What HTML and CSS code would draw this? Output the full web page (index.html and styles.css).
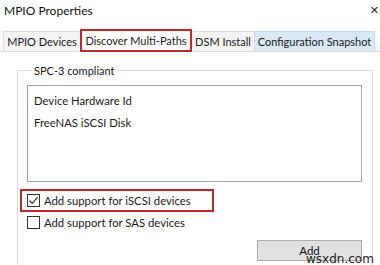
FILE: index.html
```html
<!DOCTYPE html>
<html>
<head>
<meta charset="utf-8">
<link rel="stylesheet" href="styles.css">
</head>
<body>
<div class="window">
  <div class="titlebar">
    <span class="title">MPIO Properties</span>
    <span class="close">✕</span>
  </div>
  <div class="tabs">
    <div class="tab t1">MPIO Devices</div>
    <div class="tab t2 active">Discover Multi-Paths</div>
    <div class="tab t3">DSM Install</div>
    <div class="tab t4 hover">Configuration Snapshot</div>
  </div>
  <div class="panel">
    <fieldset class="group">
      <legend>SPC-3 compliant</legend>
      <div class="listbox">
        <div class="item">Device Hardware Id</div>
        <div class="item">FreeNAS iSCSI Disk</div>
      </div>
      <div class="checks">
        <label class="check marked"><span class="box"><svg width="11" height="11" viewBox="0 0 11 11"><path d="M1.5 5.5 L4.2 8.3 L9.6 2.2" fill="none" stroke="#333" stroke-width="1.2"/></svg></span>Add support for iSCSI devices</label>
        <label class="check"><span class="box"></span>Add support for SAS devices</label>
      </div>
      <div class="actions">
        <button class="btn">Add</button>
      </div>
    </fieldset>
  </div>
  <div class="watermark">wsxdn.com</div>
</div>
</body>
</html>
```
FILE: styles.css
```css
html, body {
  margin: 0;
  padding: 0;
  background: #ffffff;
}
.window {
  position: relative;
  width: 380px;
  height: 265px;
  overflow: hidden;
  font-family: "Lato", "Open Sans", sans-serif;
  font-size: 11px;
  color: #1a1a1a;
  background: #ffffff;
}
.titlebar {
  height: 24px;
  display: flex;
  align-items: center;
  justify-content: space-between;
  padding: 0 0 4px 4px;
  box-sizing: border-box;
  background: #ffffff;
}
.title {
  font-size: 12px;
  color: #111;
}
.close {
  font-family: "DejaVu Sans", sans-serif;
  font-size: 11px;
  color: #222;
  margin-right: 1px;
}
.tabs {
  height: 28px;
  display: flex;
  align-items: flex-end;
  padding-left: 3px;
  background: linear-gradient(#ffffff, #f4f4f4);
  border-bottom: 1px solid #dadada;
  box-sizing: border-box;
}
.tab {
  height: 20px;
  line-height: 19px;
  background: #f3f3f3;
  border: 1px solid #dadada;
  border-bottom: none;
  box-sizing: border-box;
  white-space: nowrap;
  text-align: center;
  flex: none;
}
.t1 { width: 78px; }
.t2 { width: 112px; }
.t3 { width: 64px; }
.t4 { width: 121px; }
.tab.active {
  height: 23px;
  line-height: 20px;
  margin: 0 -1px -1px -1px;
  background: #ffffff;
  border: 2px solid #c0272d;
  position: relative;
  z-index: 1;
}
.tab.hover {
  background: #d9e8f5;
  border-color: #c4d9ec;
  margin-left: -1px;
}
.panel {
  padding: 12px 7px 0 17px;
}
.group {
  margin: 0;
  border: 1px solid #dcdcdc;
  padding: 8px 10px 0 9px;
  height: 200px;
}
.group legend {
  padding: 0 3px;
  margin-left: 4px;
  color: #1a1a1a;
}
.listbox {
  height: 97px;
  border: 1px solid #9f9f9f;
  border-right-color: #a8a8a8;
  padding: 4px 6px;
  box-sizing: border-box;
  background: #fff;
}
.item {
  height: 22px;
  line-height: 22px;
  font-size: 11.3px;
}
.checks {
  display: flex;
  flex-direction: column;
  margin-top: 7px;
}
.check {
  display: flex;
  align-items: center;
  gap: 4px;
  height: 21px;
  font-size: 11.3px;
  white-space: nowrap;
}
.check.marked {
  height: 23px;
  margin-left: -7px;
  padding-left: 5px;
  width: 194px;
  border: 2px solid #c0272d;
  box-sizing: border-box;
}
.box {
  width: 11px;
  height: 11px;
  border: 1px solid #333;
  background: #fff;
  display: inline-flex;
  align-items: center;
  justify-content: center;
}
.actions {
  display: flex;
  justify-content: flex-end;
  margin-top: 7px;
}
.btn {
  width: 105px;
  height: 21px;
  background: #e1e1e1;
  border: 1px solid #adadad;
  font-family: inherit;
  font-size: 11.5px;
  color: #111;
  padding: 0;
}
.watermark {
  position: absolute;
  left: 306px;
  top: 252px;
  font-family: "DejaVu Sans", sans-serif;
  font-size: 12px;
  color: #222;
}
```
